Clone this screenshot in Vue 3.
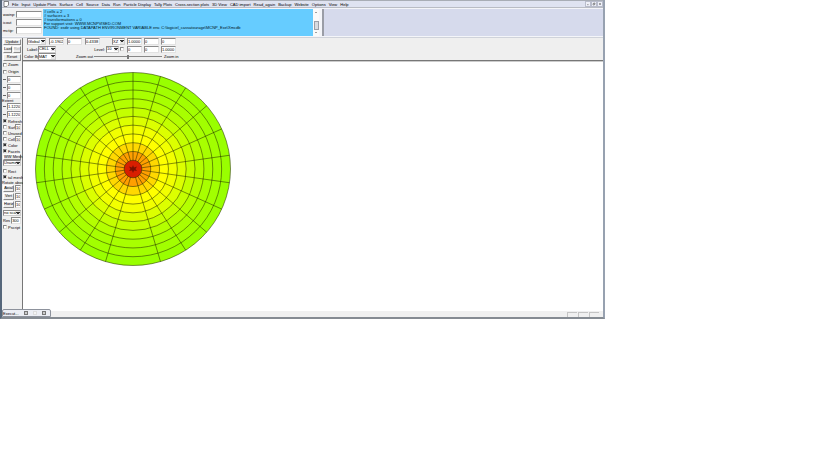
<script setup>
const menus = ['File', 'Input', 'Update Plots', 'Surface', 'Cell', 'Source', 'Data', 'Run', 'Particle Display', 'Tally Plots', 'Cross-section plots', '3D View', 'CAD import', 'Read_again', 'Backup', 'Website', 'Options', 'View', 'Help']

const files = ['wwinp:', 'icout', 'mctip:']

const log = `# cells = 2
# surfaces = 3
# transformations = 0
For support visit: WWW.MCNPVISED.COM
FOUND: xsdir using DATAPATH ENVIRONMENT VARIABLE env. C:\\logiciel_cassatourage\\MCNP_Exe\\Xmcdb`

const origin = ['0', '0', '0']
const extent = ['1.1220', '1.1220']
const flags = [
  { label: 'Refresh', on: true },
  { label: 'Surf', on: false, value: '10' },
  { label: 'Unused', on: false },
  { label: 'Cell', on: false, value: '10' },
  { label: 'Color', on: true },
  { label: 'Facets', on: true }
]
const turns = [
  { label: 'Axial', value: '10' },
  { label: 'Vert', value: '10' },
  { label: 'Horiz', value: '10' }
]

const ringColors = ['#99ff00', '#a2ff00', '#a8ff00', '#b4ff00', '#c4ff00', '#dcff00', '#f2ff00', '#ffff00', '#ffd800', '#ff9f00']
const rings = ringColors.map((fill, i) => ({ fill, rx: (97.5 * (11 - i)) / 11, ry: (96.5 * (11 - i)) / 11 }))
const spokes = Array.from({ length: 22 }, (_, i) => i)
  .filter((i) => i !== 11)
  .map((i) => {
    const a = (i * Math.PI) / 11
    return { x: 98 + 97.5 * Math.sin(a), y: 97 - 96.5 * Math.cos(a) }
  })
</script>

<template>
  <div class="window">
    <nav class="menubar">
      <svg class="doc" viewBox="0 0 6 6"><path d="M1 .5h4.500v3.500L4 5.500H1z" fill="#fff" stroke="#555" stroke-width=".7" /></svg>
      <a v-for="m in menus" :key="m" href="#">{{ m }}</a>
      <span class="caption">
        <button aria-label="Minimize"><svg viewBox="0 0 6 6"><path d="M1.500 4h2.500" /></svg></button>
        <button aria-label="Restore"><svg viewBox="0 0 6 6"><path d="M2.500 2.500v-1h2v2h-1M1.500 2.500h2v2h-2z" /></svg></button>
        <button aria-label="Close"><svg viewBox="0 0 6 6"><path d="M1.500 1.500l3 3M4.500 1.500l-3 3" /></svg></button>
      </span>
    </nav>

    <header class="top">
      <div class="files">
        <label v-for="f in files" :key="f"><span>{{ f }}</span><input type="text" /></label>
      </div>
      <pre class="log">{{ log }}</pre>
      <div class="scroll"><i class="up"></i><i class="thumb"></i><i class="down"></i></div>
      <div class="backdrop"></div>
    </header>

    <div class="main">
      <aside class="side">
        <div class="row button-row"><button>Update</button></div>
        <div class="row tall"><button>Last</button><button disabled>Rot</button></div>
        <div class="row tall"><button>Reset</button></div>
        <label class="row mid"><input type="checkbox" />Zoom</label>
        <label class="row mid"><input type="checkbox" />Origin</label>
        <label v-for="(v, i) in origin" :key="'o' + i" class="row tall"><b class="axis"></b><input type="text" :value="v" /></label>
        <div class="row caption-row">Extent</div>
        <label v-for="(v, i) in extent" :key="'e' + i" class="row tall"><b class="axis"></b><input type="text" :value="v" /></label>
        <div v-for="f in flags" :key="f.label" class="row">
          <label class="tick"><input type="checkbox" :checked="f.on" />{{ f.label }}</label>
          <input v-if="f.value" type="text" class="small" :value="f.value" :aria-label="f.label + ' size'" />
        </div>
        <div class="row"><button>WW Mesh</button></div>
        <div class="row"><span class="pick"><select aria-label="Mesh"><option>Unamed</option></select></span></div>
        <label class="row spaced"><input type="checkbox" />Rect</label>
        <label class="row"><input type="checkbox" checked />tal mesh</label>
        <div class="row caption-row last">Rotate about</div>
        <div v-for="t in turns" :key="t.label" class="row tall">
          <button>{{ t.label }}</button><input type="text" class="small" :value="t.value" :aria-label="t.label" />
        </div>
        <div class="row spaced"><span class="pick"><select aria-label="Scale"><option>no scale</option></select></span></div>
        <label class="row tall">Res<input type="text" value="300" /></label>
        <label class="row"><input type="checkbox" />Pscript</label>
      </aside>

      <section class="work">
        <div class="toolbar">
          <div class="line first">
            <span class="pick"><select aria-label="Frame"><option>Global</option></select></span>
            <input type="text" value="-0.1902" aria-label="X" />
            <input type="text" value="0" aria-label="Y" />
            <input type="text" value="0.4338" aria-label="Z" />
            <span class="pick"><select aria-label="Plane"><option>XZ</option></select></span>
            <input type="text" value="1.0000" aria-label="U1" />
            <input type="text" value="0" aria-label="U2" />
            <input type="text" value="0" aria-label="U3" />
          </div>
          <div class="line second">
            <label for="lab">Label:</label>
            <span class="pick"><select id="lab"><option>CELL</option></select></span>
            <label for="lev" class="caption-end">Level:</label>
            <span class="pick"><select id="lev"><option>10</option></select></span>
            <input type="checkbox" aria-label="Use level" />
            <input type="text" value="0" aria-label="V1" />
            <input type="text" value="0" aria-label="V2" />
            <input type="text" value="1.0000" aria-label="V3" />
          </div>
          <div class="line third">
            <label for="col">Color By:</label>
            <span class="pick"><select id="col"><option>MAT</option></select></span>
            <label for="zoom" class="caption-end">Zoom out</label>
            <input id="zoom" type="range" value="50" />
            <span>Zoom in</span>
          </div>
        </div>
        <div class="canvas">
          <svg class="plot" viewBox="0 0 196 194">
            <ellipse v-for="(r, i) in rings" :key="i" cx="98" cy="97" :rx="r.rx" :ry="r.ry" :fill="r.fill" />
            <line v-for="(s, i) in spokes" :key="'s' + i" x1="98" y1="97" :x2="s.x" :y2="s.y" />
            <ellipse cx="98" cy="97" rx="8.900" ry="8.800" fill="#d81e00" />
            <path class="core" d="M98 93l1 2.500 3-1-1.500 2.500 1.500 2-3-.5-1 2.500-1-2.500-3 .5 1.500-2-1.500-2.500 3 1z" />
          </svg>
        </div>
      </section>
    </div>

    <footer class="status">
      <div class="mini"><span>Execut...</span><button aria-label="Restore window"></button><button aria-label="Maximize window" disabled></button><button aria-label="Close window"></button></div>
      <span class="panes"><i></i><i></i><i></i></span>
    </footer>
  </div>
</template>

<style>
body {
  background: #fff;
}
</style>

<style scoped>
* {
  box-sizing: border-box;
}

.window {
  margin-right: 214px;
  border-left: 2px solid #56677b;
  border-right: 2px solid #97a1b0;
  border-bottom: 2px solid #858b92;
  background: #f0f0f0;
  color: #000;
  font: 4px/5px "Liberation Sans", Arial, sans-serif;
}

button,
input,
select {
  margin: 0;
  font: inherit;
  color: inherit;
}

.menubar {
  display: flex;
  align-items: center;
  gap: 3px;
  height: 7px;
  padding-left: 1px;
  border-top: 1px solid #a8adb5;
  background: #dfe3f1;
  white-space: nowrap;
}

.menubar a {
  color: #000;
  text-decoration: none;
}

.doc {
  width: 6px;
  height: 6px;
}

.caption {
  display: flex;
  margin-left: auto;
}

.caption button {
  display: flex;
  width: 6px;
  height: 6px;
  padding: 0;
  border: 1px solid #b9bdcc;
  background: #eef0f8;
}

.caption svg {
  width: 100%;
  fill: none;
  stroke: #777;
}

.top {
  display: flex;
  height: 31px;
  padding: 1px 0;
  border-top: 1px solid #b9bcc4;
  border-bottom: 1px solid #d0d3da;
  background: #f4f5f9;
}

.files {
  display: flex;
  flex-direction: column;
  justify-content: center;
  width: 41px;
  background: #f0f0f0;
}

.files label {
  display: flex;
  justify-content: space-between;
  align-items: center;
  height: 8px;
  padding: 0 1px;
}

.files input {
  width: 26px;
}

input[type="text"] {
  height: 7px;
  min-width: 0;
  padding: 0;
  border: 1px solid;
  border-color: #8b8b8b #e2e2e2 #e2e2e2 #8b8b8b;
  border-radius: 0;
  background: #fff;
}

.log {
  width: 270px;
  margin: 0;
  padding: 1px;
  overflow: hidden;
  background: #66ccff;
  color: #001420;
  font: inherit;
  line-height: 4px;
}

.scroll {
  display: flex;
  flex-direction: column;
  justify-content: space-between;
  align-items: center;
  width: 6px;
  padding: 2px 0;
  background: #fafafa;
}

.up,
.down {
  border: 1px solid transparent;
}

.up {
  border-bottom-color: #444;
}

.down {
  border-top-color: #444;
}

.thumb {
  width: 5px;
  height: 9px;
  margin-top: 6px;
  border: 1px solid #9a9fa8;
  background: #d8dbe0;
}

.backdrop {
  flex: 1;
  margin-left: 3px;
  border-left: 2px solid #9a9da6;
  background: #d6daec;
}

.main {
  display: flex;
}

.side {
  flex: none;
  width: 21px;
  border-right: 1px solid #777;
}

.row {
  display: flex;
  align-items: center;
  gap: 1px;
  height: 6px;
  padding: 0 1px;
  white-space: nowrap;
}

.button-row,
.mid {
  height: 7px;
}

.tall {
  height: 8px;
}

.caption-row {
  height: 3px;
  padding: 0;
}

.caption-row.last {
  height: 4px;
}

.spaced {
  margin-top: 2px;
}

.row button {
  flex: 1;
  min-width: 0;
  height: 6px;
  padding: 0;
  border: 1px solid;
  border-color: #fff #8b8b8b #8b8b8b #fff;
  background: #ececec;
  line-height: 4px;
}

.tall button {
  height: 7px;
}

.row button:disabled {
  color: #aaa;
}

.row input[type="text"] {
  flex: 1;
  width: 10px;
}

.row input.small {
  flex: none;
  width: 6px;
  height: 6px;
}

.tall input.small {
  height: 7px;
}

.axis {
  width: 3px;
  height: 1px;
  background: #666;
}

.tick {
  display: flex;
  flex: 1;
  align-items: center;
  gap: 1px;
  min-width: 0;
}

input[type="checkbox"] {
  flex: none;
  width: 4px;
  height: 4px;
  appearance: none;
  border: 1px solid;
  border-color: #888 #ddd #ddd #888;
  background: #fff;
}

input[type="checkbox"]:checked {
  background: #333;
}

.pick {
  display: grid;
  flex: 1;
  align-items: center;
  height: 7px;
}

.row .pick {
  height: 6px;
}

.pick select,
.pick::after {
  grid-area: 1 / 1;
}

.pick select {
  width: 100%;
  height: 100%;
  padding: 0;
  appearance: none;
  border: 1px solid;
  border-color: #8b8b8b #ccc #ccc #8b8b8b;
  border-radius: 0;
  background: #fff;
  line-height: 4px;
}

.pick::after {
  content: "";
  justify-self: end;
  width: 4px;
  height: 4px;
  margin-right: 1px;
  background: conic-gradient(from -45deg at 50% 70%, #333 90deg, #e6e6e6 0) center / 4px 3px no-repeat #e6e6e6;
  pointer-events: none;
}

.work {
  flex: 1;
  min-width: 0;
}

.toolbar {
  height: 23px;
  border-bottom: 1px solid #777;
  background: #efefef;
  white-space: nowrap;
}

.line {
  display: grid;
  align-items: center;
  height: 7px;
  padding-left: 4px;
}

.second {
  height: 8px;
}

.first {
  grid-template-columns: 22px 18px 18px 27px 15px 17px 17px 15px;
}

.first .pick {
  margin-right: 3px;
}

.line input[type="text"] {
  width: 15px;
}

.first .pick ~ .pick {
  margin-right: 2px;
}

.second {
  grid-template-columns: 11px 18px 50px 13px 8px 17px 17px 15px;
}

.second input[type="checkbox"] {
  margin-left: 1px;
}

.third {
  grid-template-columns: 14px 18px 38px 68px auto;
  justify-content: start;
  padding-left: 1px;
}

.caption-end {
  padding-right: 1px;
  text-align: right;
}

input[type="range"] {
  width: 68px;
  height: 5px;
  appearance: none;
  background: linear-gradient(#888, #888) center / 100% 1px no-repeat;
}

input[type="range"]::-webkit-slider-thumb {
  width: 2px;
  height: 4px;
  appearance: none;
  background: #777;
}

.third span:last-child {
  padding-left: 2px;
}

.canvas {
  padding: 10px 12px 45px;
  border-top: 1px solid #ccc;
  background: #fff;
}

.plot {
  display: block;
  width: 196px;
  height: 194px;
}

.plot ellipse,
.plot line {
  stroke: #202800;
  stroke-opacity: 0.75;
  stroke-width: 0.7;
}

.core {
  fill: #7a1000;
}

.status {
  display: flex;
  align-items: flex-end;
  justify-content: space-between;
  height: 6px;
  background: #f0f0f0;
}

.mini {
  display: flex;
  align-items: center;
  gap: 5px;
  width: 49px;
  height: 8px;
  padding-right: 6px;
  border: 1px solid #8d929c;
  border-radius: 2px 2px 0 0;
  background: #eceef4;
}

.mini span {
  flex: 1;
}

.mini button {
  flex: none;
  width: 4px;
  height: 4px;
  padding: 0;
  border: 1px solid #777;
  background: #ccc;
}

.mini button:disabled {
  border-color: #ddd;
  background: #f4f4f4;
}

.panes {
  display: flex;
  gap: 1px;
  padding-right: 4px;
}

.panes i {
  width: 10px;
  height: 5px;
  border-top: 1px solid #c4c4c4;
  border-left: 1px solid #c4c4c4;
}
</style>
